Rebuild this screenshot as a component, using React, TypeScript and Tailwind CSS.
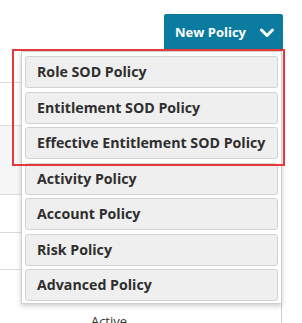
import React from 'react';

const policies = [
  'Role SOD Policy',
  'Entitlement SOD Policy',
  'Effective Entitlement SOD Policy',
  'Activity Policy',
  'Account Policy',
  'Risk Policy',
  'Advanced Policy',
];

const rows = [
  { h: 'h-[32px]', bg: 'bg-white' },
  { h: 'h-[43px]', bg: 'bg-white' },
  { h: 'h-[69px]', bg: 'bg-[#f7f7f7]' },
  { h: 'h-[38px]', bg: 'bg-white' },
  { h: 'h-[37px]', bg: 'bg-white' },
];

export default function App() {
  return (
    <div className="relative w-[302px] h-[323px] overflow-hidden bg-white font-['Open_Sans',sans-serif] text-[#333]">
      <div className="flex justify-end pt-[14px] pr-[19px]">
        <button className="flex items-center h-[37px] w-[119px] pl-[11px] rounded-[2px] bg-[#0b7b9f] text-white text-[13px] font-bold">
          <span>New Policy</span>
          <svg className="ml-[13px]" width="16" height="10" viewBox="0 0 16 10">
            <polyline points="2.5,2 8,7.5 13.5,2" fill="none" stroke="white" strokeWidth="3" strokeLinecap="round" strokeLinejoin="round" />
          </svg>
        </button>
      </div>

      <div className="w-[282px]">
        {rows.map((r, i) => (
          <div key={i} className={`${r.h} ${r.bg} border-b border-[#dcdcdc]`} />
        ))}
        <div className="h-[60px] border-r border-[#cfcfcf] flex">
          <div className="w-[218px] pt-[42px] text-center text-[13px] leading-[18px]">Active</div>
        </div>
      </div>

      <div className="absolute left-[21px] top-[51px] w-[261px] bg-white border border-[#cfcfcf] shadow-[0_2px_5px_rgba(0,0,0,0.2)] px-[3px] pt-[4px] pb-[2px] flex flex-col gap-[3.5px]">
        {policies.map((p) => (
          <div
            key={p}
            className="h-[32px] flex items-center pl-[11px] bg-[#efefef] border border-[#d2d2d2] rounded-[3px] text-[14.2px] font-bold text-[#2e2e2e]"
          >
            {p}
          </div>
        ))}
      </div>

      <div className="absolute left-[12px] top-[49px] w-[273px] h-[117px] border-2 border-[#e8393a]" />
    </div>
  );
}
